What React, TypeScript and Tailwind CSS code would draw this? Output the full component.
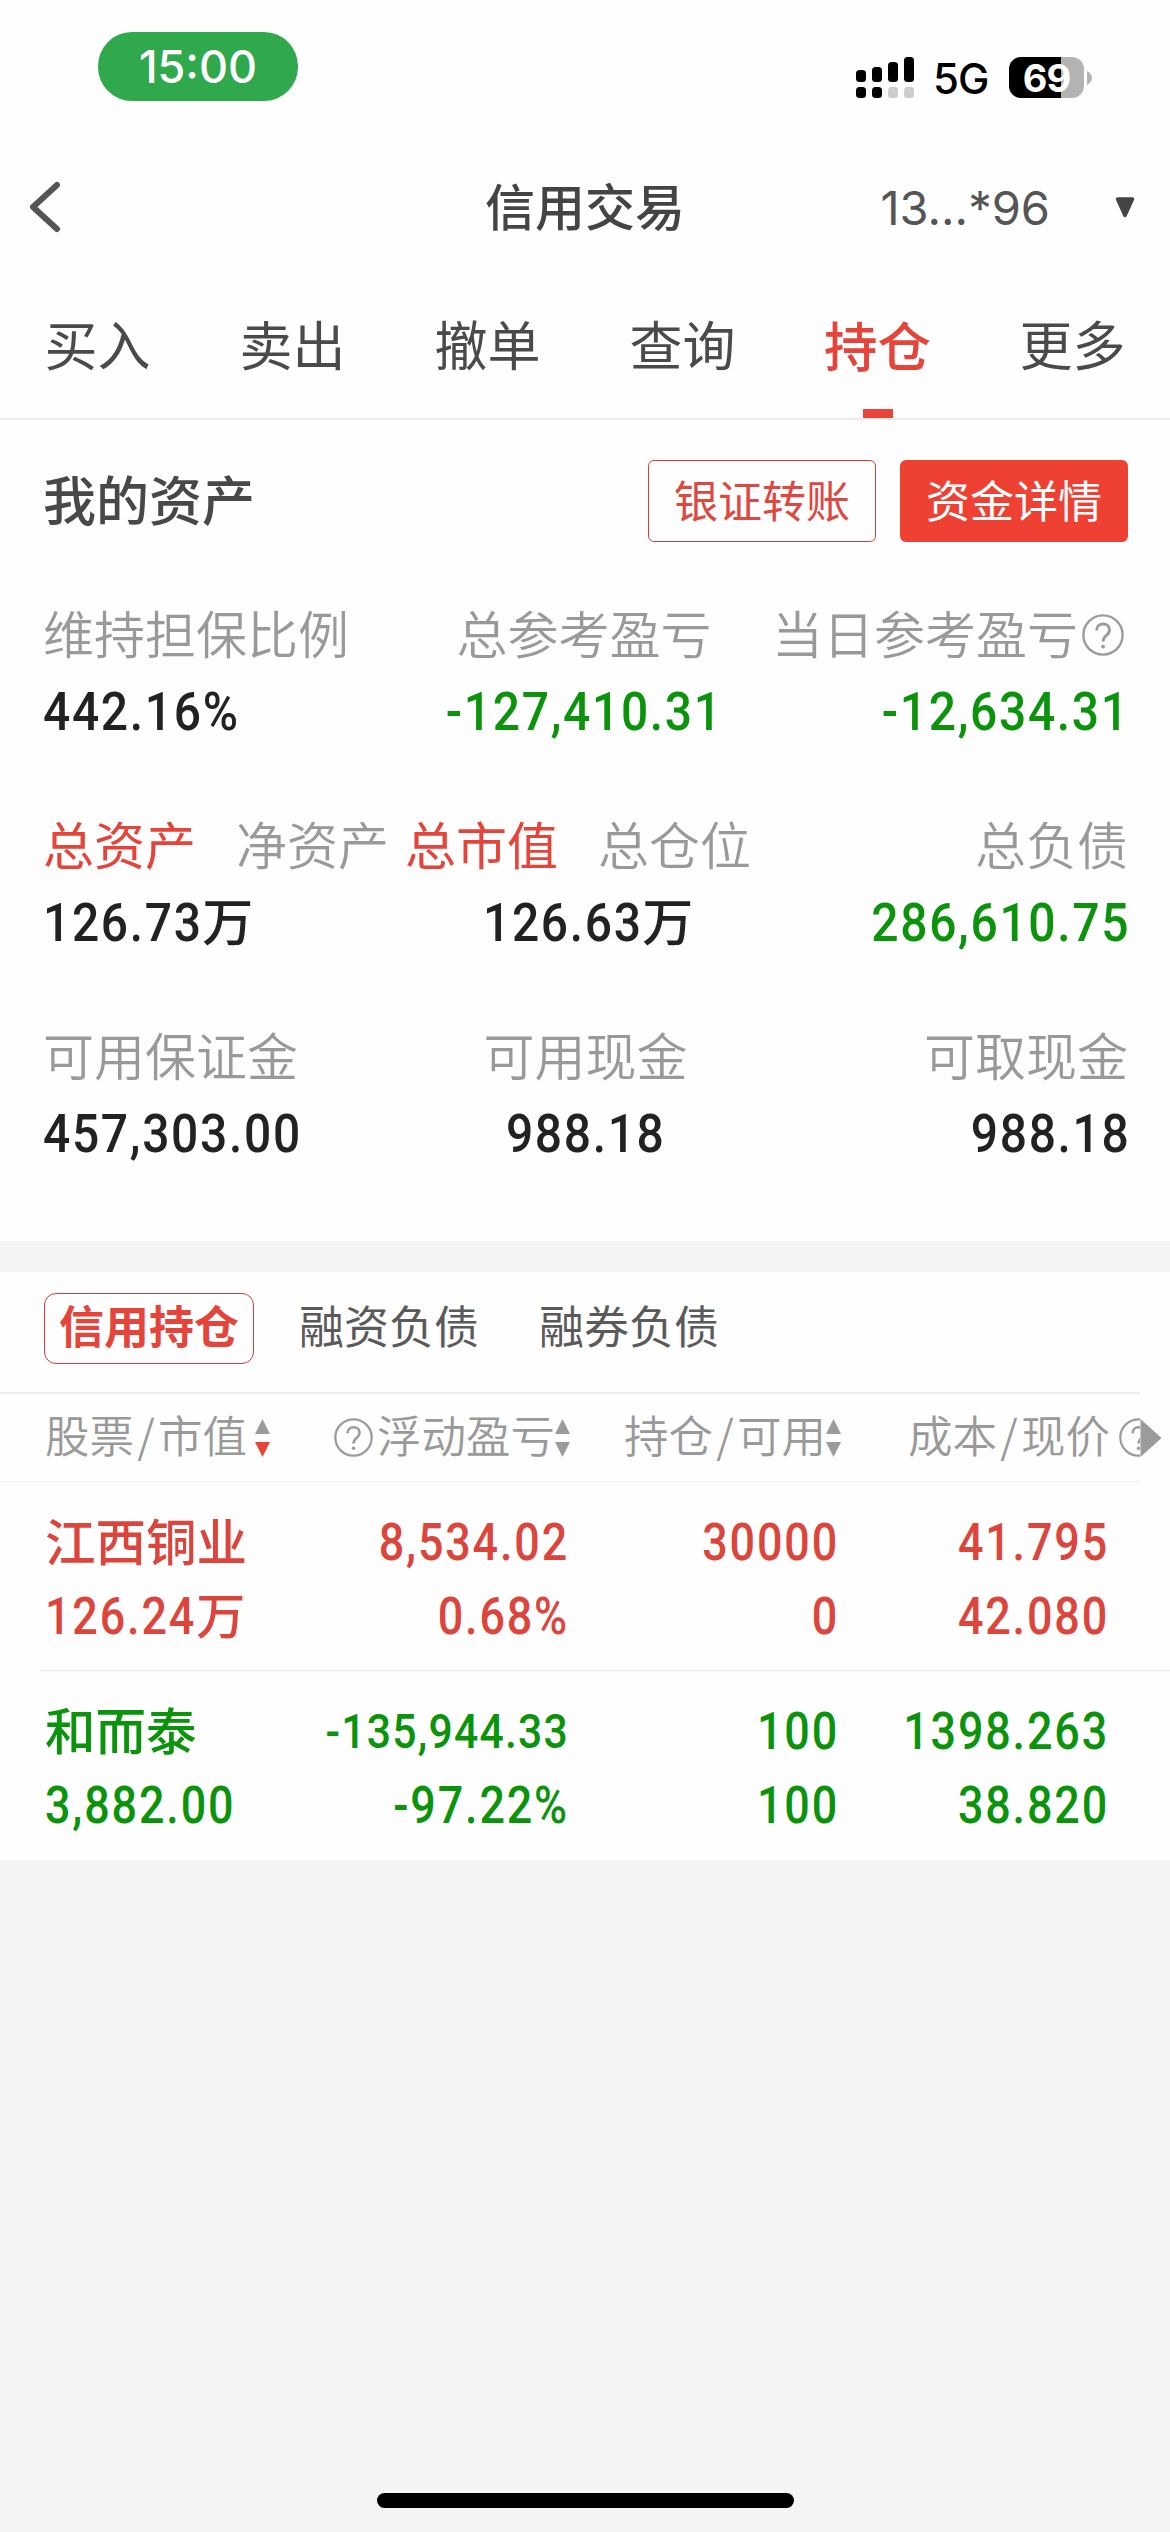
import React from "react";

const CJK = "font-['Noto_Sans_CJK_SC',sans-serif]";
const NUM = "font-[Roboto,'Noto_Sans_CJK_SC',sans-serif]";

function Help({ className }: { className: string }) {
  return (
    <svg viewBox="0 0 42 42" className={className} fill="none" stroke="#9b9b9b" strokeWidth="2.4">
      <circle cx="21" cy="21" r="19.6" />
      <path d="M14.6 16.4c0-4 2.8-6.4 6.5-6.4s6.4 2.4 6.4 5.9c0 2.700-1.400 4.100-3.300 5.700-2 1.600-3.100 2.900-3.100 5.900" strokeWidth="2.8" />
      <circle cx="21.100" cy="32.600" r="1.900" fill="#9b9b9b" stroke="none" />
    </svg>
  );
}

function Sort({ down = "#9b9b9b" }: { down?: string }) {
  return (
    <svg viewBox="0 0 15 38" className="h-[38px] w-[15px] shrink-0">
      <path d="M7.500 0L15 15H0z" fill="#9b9b9b" />
      <path d="M0 23h15L7.500 38z" fill={down} />
    </svg>
  );
}

// Undoes the condensed scale of the surrounding figures so the character keeps its full width.
function Wan({ className }: { className: string }) {
  return (
    <span className={`inline-block h-0 origin-left scale-x-[1.136] align-baseline tracking-normal leading-[0] ${CJK} ${className}`}>万</span>
  );
}

function StatusBar() {
  return (
    <div className="flex h-[150px] justify-between pl-[98px] pr-[78px] font-[Inter,sans-serif]">
      <div className="mt-8 flex h-[69px] w-[200px] items-center justify-center rounded-[34px] bg-[#30a84c] text-[45px] font-medium leading-none text-white">
        <span className="-mt-px">15:00</span>
      </div>
      <div className="mt-[57px] flex h-[41px] items-center">
        <svg viewBox="0 0 58 41" className="h-[41px] w-[58px]">
          <rect x="0" y="13" width="10" height="12" rx="3.500" />
          <rect x="16" y="10" width="10" height="15" rx="3.500" />
          <rect x="32" y="5" width="10" height="20" rx="3.500" />
          <rect x="48" y="0" width="10" height="25" rx="3.500" />
          <rect x="0" y="30" width="10" height="11" rx="3.500" />
          <rect x="16" y="30" width="10" height="11" rx="3.500" />
          <rect x="32" y="30" width="10" height="11" rx="3.500" fill="#ccc" />
          <rect x="48" y="30" width="10" height="11" rx="3.500" fill="#ccc" />
        </svg>
        <span className="ml-[19px] mt-[3px] w-[76px] text-[42px] font-medium leading-none tracking-[-1px] text-black">5G</span>
        <div className="flex h-[41px] w-[75px] items-center justify-center rounded-[12px] bg-[linear-gradient(90deg,#000_52px,#b3b3b3_52px)] text-[38px] font-bold leading-none tracking-[-1px] text-white">
          69
        </div>
        <svg viewBox="0 0 5 14" className="ml-[3px] h-[14px] w-[5px]">
          <path d="M0 0Q5 3 5 7T0 14z" fill="#b3b3b3" />
        </svg>
      </div>
    </div>
  );
}

function NavBar() {
  return (
    <div className="grid h-[114px] grid-cols-[1fr_auto_1fr] items-center text-[#444]">
      <svg viewBox="0 0 32 52" className="ml-[29px] h-[52px] w-8" fill="none" stroke="#555" strokeWidth="6" strokeLinecap="round" strokeLinejoin="round">
        <path d="M28 4L4 26l24 22" />
      </svg>
      <h1 className="-mt-1.5 text-[50px] font-medium leading-none">信用交易</h1>
      <div className="flex items-center justify-end pr-[35px] font-[Inter,sans-serif] text-[47px] leading-none text-[#555]">
        <span className="mr-[65px]">13...*96</span>
        <svg viewBox="0 0 20 21" className="h-[21px] w-5">
          <path d="M2.500 2h15L10 18.500z" fill="#444" stroke="#444" strokeWidth="3.500" strokeLinejoin="round" />
        </svg>
      </div>
    </div>
  );
}

function MainTabs() {
  const tabs = ["买入", "卖出", "撤单", "查询", "持仓", "更多"];
  return (
    <nav className="grid h-[156px] grid-cols-6 border-b-2 border-[#ebebeb] text-center text-[#4a4a4a]">
      {tabs.map((t) =>
        t === "持仓" ? (
          <div key={t} className="flex flex-col items-center justify-between pt-[53px] text-[53.5px] font-medium leading-[54px] text-[#e5443a]">
            {t}
            <span className="h-[9px] w-[30px] bg-[#e8443a]" />
          </div>
        ) : (
          <div key={t} className="pt-[52px] text-[53px] leading-[54px]">{t}</div>
        )
      )}
    </nav>
  );
}

const label = "h-[50px] text-[51px] font-[350] leading-[50px] text-[#999]";

const origins = {
  left: "origin-left",
  center: "origin-center",
  right: "origin-right -mr-0.5",
};

function Value({ children, color = "text-[#222]", align = "left" }: { children: React.ReactNode; color?: string; align?: "left" | "center" | "right" }) {
  return (
    <div className={`mt-[29px] h-[50px] text-[54.5px] font-medium leading-[50px] tracking-[1.9px] ${NUM} ${color}`}>
      <span className={`inline-block h-[50px] scale-x-[0.88] ${origins[align]}`}>{children}</span>
    </div>
  );
}

const GREEN = "text-[#0c930c]";

function Assets() {
  return (
    <section className="h-[821px] pl-[43px] pr-[42px] pt-10 whitespace-nowrap">
      <div className="flex h-[82px] items-center">
        <h2 className="-mt-1.5 flex-1 text-[53px] font-medium leading-none text-[#484848]">我的资产</h2>
        <button className="h-[82px] w-[228px] rounded-[6px] border border-[#d93c3a] pb-1 text-[44px] leading-[72px] text-[#dd4840]">银证转账</button>
        <button className="ml-6 h-[82px] w-[228px] rounded-[6px] bg-[#ee4033] pb-1 text-[44px] leading-[72px] text-white">资金详情</button>
      </div>

      <div className="mt-[65px] flex h-[211px] justify-between">
        <div className="w-[353px]">
          <div className={label}>维持担保比例</div>
          <Value>442.16%</Value>
        </div>
        <div className="flex flex-1 flex-col items-center">
          <div className={label}>总参考盈亏</div>
          <Value color={GREEN} align="center">-127,410.31</Value>
        </div>
        <div className="text-right">
          <div className={`${label} flex items-center`}>
            当日参考盈亏
            <Help className="ml-1 mr-1 mt-[5px] h-[42px] w-[42px]" />
          </div>
          <Value color={GREEN} align="right">-12,634.31</Value>
        </div>
      </div>

      <div className="flex h-[211px]">
        <div className="w-[362px]">
          <div className={`${label} flex gap-10`}>
            <span className="font-normal text-[#e5443a]">总资产</span>
            <span>净资产</span>
          </div>
          <Value>126.73<Wan className="text-[51px]" /></Value>
        </div>
        <div className="w-[360px] text-center">
          <div className={`${label} flex gap-10`}>
            <span className="font-normal text-[#e5443a]">总市值</span>
            <span>总仓位</span>
          </div>
          <Value align="center">126.63<Wan className="text-[51px]" /></Value>
        </div>
        <div className="flex-1 text-right">
          <div className={label}>总负债</div>
          <Value color={GREEN} align="right">286,610.75</Value>
        </div>
      </div>

      <div className="grid grid-cols-3">
        <div>
          <div className={label}>可用保证金</div>
          <Value>457,303.00</Value>
        </div>
        <div className="text-center">
          <div className={label}>可用现金</div>
          <Value align="center">988.18</Value>
        </div>
        <div className="text-right">
          <div className={label}>可取现金</div>
          <Value align="right">988.18</Value>
        </div>
      </div>
    </section>
  );
}

function HoldingTabs() {
  return (
    <div className="mr-[30px] flex h-[122px] items-start border-b-2 border-[#ebebeb] pl-11 pt-[21px] text-[45px] leading-[62px] text-[#5a5a5a]">
      <div className="h-[71px] w-[210px] rounded-[12px] border border-[#d93c3a] text-center font-bold text-[#e5443a]">信用持仓</div>
      <div className="ml-[45px] mt-px">融资负债</div>
      <div className="ml-[60px] mt-px">融券负债</div>
    </div>
  );
}

function Pair({ a, b }: { a: string; b: string }) {
  return (
    <span className="flex">
      {a}
      <span className="w-[24px] text-center">/</span>
      {b}
    </span>
  );
}

function TableHeader() {
  return (
    <div className="flex h-[88px] items-center text-[44.5px] font-[350] leading-none text-[#999]">
      <div className="flex h-[88px] w-[1140px] shrink-0 items-center overflow-hidden whitespace-nowrap border-b border-[#f0f0f0] pl-[45px]">
        <div className="flex w-[289px] shrink-0 items-center">
          <span className="-mt-1.5"><Pair a="股票" b="市值" /></span>
          <span className="ml-2"><Sort down="#e5443a" /></span>
        </div>
        <div className="flex w-[290px] shrink-0 items-center">
          <Help className="mr-1 h-[39px] w-[39px]" />
          <span className="-mt-1.5">浮动盈亏</span>
          <Sort />
        </div>
        <div className="flex w-[284px] shrink-0 items-center">
          <span className="-mt-1.5"><Pair a="持仓" b="可用" /></span>
          <Sort />
        </div>
        <div className="flex shrink-0 items-center">
          <span className="-mt-1.5"><Pair a="成本" b="现价" /></span>
          <Help className="ml-[9px] h-[39px] w-[39px]" />
        </div>
      </div>
      <svg viewBox="0 0 21 38" className="h-[38px] w-[22px]">
        <path d="M0 0L21 19 0 38z" fill="#9b9b9b" />
      </svg>
    </div>
  );
}

type Holding = { name: string; marketValue: React.ReactNode; cells: [string, string][]; small?: boolean };

function Row({ color, name, marketValue, cells, small }: Holding & { color: string }) {
  return (
    <div className={`grid grid-cols-[200px_322px_270px_270px] pl-[45px] pt-[24px] text-[51px] font-medium leading-[74px] tracking-[2.1px] whitespace-nowrap ${NUM} ${color}`}>
      <div>
        <div className={`h-[74px] text-[50.5px] leading-[66px] tracking-normal ${CJK}`}>{name}</div>
        <div className="h-[74px] w-max origin-left scale-x-[0.88]">{marketValue}</div>
      </div>
      {cells.map(([top, bottom], i) => (
        <div key={i} className="-mr-0.5 origin-right scale-x-[0.88] text-right">
          <div className={i === 0 && small ? "h-[74px] text-[48.5px] tracking-[1.4px]" : "h-[74px]"}>{top}</div>
          <div className="h-[74px]">{bottom}</div>
        </div>
      ))}
    </div>
  );
}

export default function App() {
  return (
    <div className={`flex h-[2532px] w-[1170px] flex-col overflow-hidden bg-[#f4f4f4] ${CJK}`}>
      <div className="bg-[#fefefe]">
        <StatusBar />
        <NavBar />
        <MainTabs />
        <Assets />
      </div>
      <div className="mt-[31px] h-[588px] bg-[#fefefe]">
        <HoldingTabs />
        <TableHeader />
        <div className="h-[188px]">
          <Row
            color="text-[#dc453c]"
            name="江西铜业"
            marketValue={<>126.24<Wan className="text-[49px]" /></>}
            cells={[["8,534.02", "0.68%"], ["30000", "0"], ["41.795", "42.080"]]}
          />
        </div>
        <div className="ml-[41px] h-px bg-[#e8e8e8]" />
        <Row
          small
          color={GREEN}
          name="和而泰"
          marketValue="3,882.00"
          cells={[["-135,944.33", "-97.22%"], ["100", "100"], ["1398.263", "38.820"]]}
        />
      </div>
      <div className="mb-6 ml-[377px] mt-auto h-[15px] w-[417px] rounded-full bg-black" />
    </div>
  );
}
